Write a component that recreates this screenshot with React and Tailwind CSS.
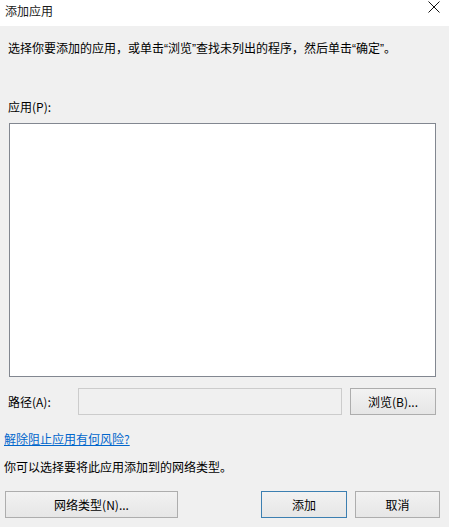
export default function App() {
  const font = { fontFamily: '"Noto Sans CJK SC", "Noto Sans", sans-serif' };
  const quote = { fontFamily: '"Liberation Sans", sans-serif' };
  const btn =
    "h-[27px] flex items-center justify-center border border-[#adadad] bg-gradient-to-b from-[#f2f2f2] to-[#e6e6e6] text-[12px] text-black";
  return (
    <div
      className="w-[449px] h-[527px] bg-[#f0f0f0] flex flex-col text-[12px] leading-[16px] text-black overflow-hidden"
      style={font}
    >
      <div className="h-[26px] bg-white flex items-start justify-between pl-[5px] pr-[9px] pt-[3px]">
        <span className="text-[12px] leading-[16px] text-[#1a1a1a]">添加应用</span>
        <svg width="12" height="12" viewBox="0 0 12 12" className="-mt-[2px]">
          <path d="M0.5 0.5 L11.5 11.5 M11.5 0.5 L0.5 11.5" stroke="#111" strokeWidth="1" fill="none" />
        </svg>
      </div>

      <div className="mt-[14px] pl-[8px]">
        选择你要添加的应用，或单击<span style={quote}>“</span>浏览<span style={quote}>”</span>查找未列出的程序，然后单击<span style={quote}>“</span>确定<span style={quote}>”</span>。
      </div>

      <div className="mt-[42px] pl-[8px]">应用(P):</div>

      <div className="mt-[8px] ml-[9px] w-[427px] h-[254px] bg-white border border-[#828790]"></div>

      <div className="mt-[11px] ml-[8px] w-[428px] flex items-center h-[27px]">
        <span className="w-[70px]">路径(A):</span>
        <div className="w-[264px] h-[27px] border border-[#cccccc] bg-[#f0f0f0]"></div>
        <div className={btn + " ml-[8px] w-[86px] h-[26px]"}>浏览(B)...</div>
      </div>

      <div className="mt-[16px] pl-[4px]">
        <span className="text-[#0066cc] underline">解除阻止应用有何风险?</span>
      </div>

      <div className="mt-[12px] pl-[4px]">你可以选择要将此应用添加到的网络类型。</div>

      <div className="mt-[16px] flex items-center">
        <div className={btn + " ml-[5px] w-[173px]"}>网络类型(N)...</div>
        <div className="ml-[83px] w-[86px] h-[27px] flex items-center justify-center border border-[#3c7fb1] bg-gradient-to-b from-[#f2f2f2] to-[#e6e6e6]">
          添加
        </div>
        <div className={btn + " ml-[8px] w-[85px]"}>取消</div>
      </div>
    </div>
  );
}
